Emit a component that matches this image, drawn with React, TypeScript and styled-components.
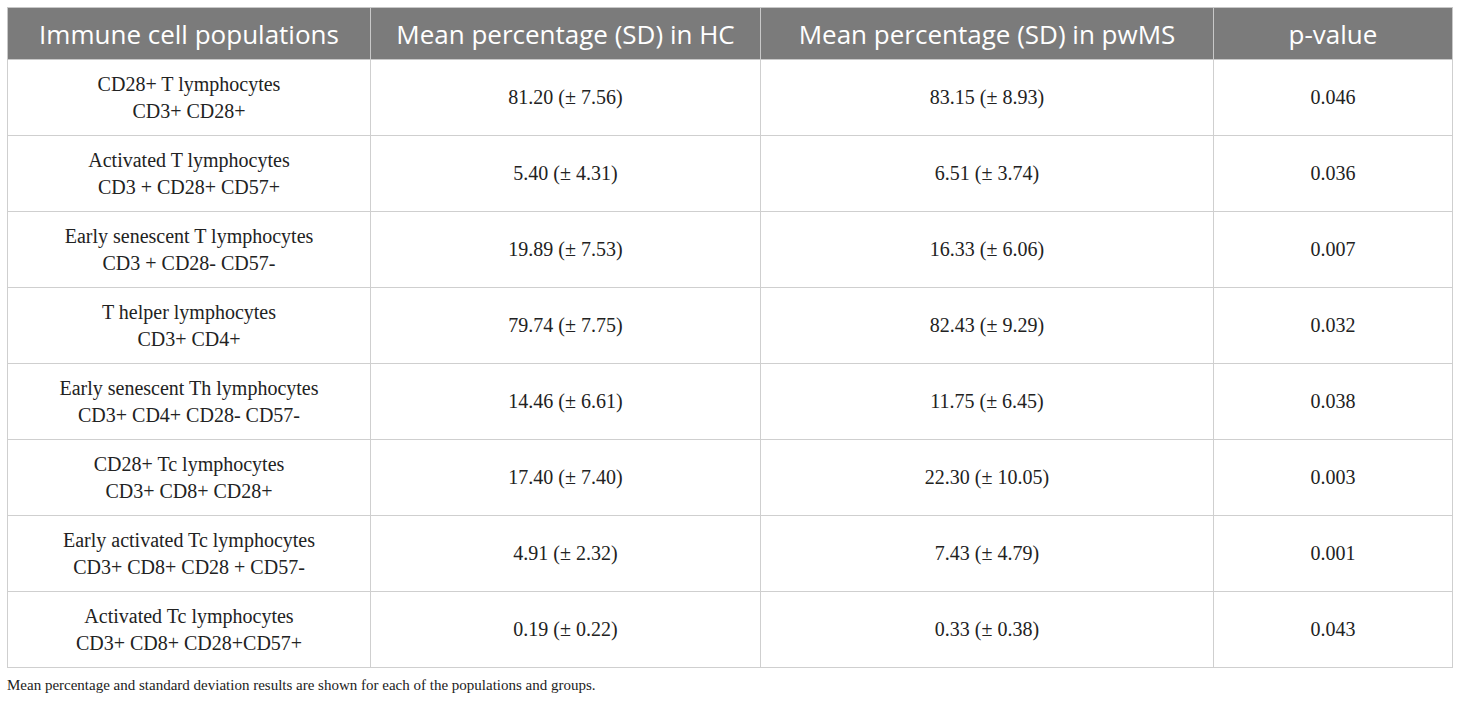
import React from 'react';
import styled, { createGlobalStyle } from 'styled-components';

const Global = createGlobalStyle`
  body {
    margin: 0;
    background: #fff;
  }
`;

const Page = styled.div`
  padding: 7px 8px 0 7px;
`;

const Table = styled.table`
  width: 1445px;
  border-collapse: collapse;
  table-layout: fixed;
`;

const Col = styled.col<{ w: number }>`
  width: ${(p) => p.w}px;
`;

const HeadCell = styled.th`
  height: 52px;
  box-sizing: border-box;
  padding: 0;
  background: #7b7b7b;
  color: #fff;
  font-family: "Open Sans", "Liberation Sans", sans-serif;
  font-size: 26px;
  font-weight: 400;
  text-align: center;
  border: 1px solid #c8c8c8;
`;

const Cell = styled.td`
  height: 76px;
  box-sizing: border-box;
  padding: 0 4px;
  border: 1px solid #cfcfcf;
  text-align: center;
  vertical-align: middle;
  font-family: "Liberation Serif", "Times New Roman", serif;
  font-size: 20px;
  line-height: 27px;
  color: #222;
`;

const Note = styled.div`
  margin-top: 9px;
  font-family: "Liberation Serif", "Times New Roman", serif;
  font-size: 15px;
  color: #222;
`;

const cols = [
  { label: 'Immune cell populations', w: 363 },
  { label: 'Mean percentage (SD) in HC', w: 390 },
  { label: 'Mean percentage (SD) in pwMS', w: 453 },
  { label: 'p-value', w: 239 },
];

const rows = [
  ['CD28+ T lymphocytes', 'CD3+ CD28+', '81.20 (± 7.56)', '83.15 (± 8.93)', '0.046'],
  ['Activated T lymphocytes', 'CD3 + CD28+ CD57+', '5.40 (± 4.31)', '6.51 (± 3.74)', '0.036'],
  ['Early senescent T lymphocytes', 'CD3 + CD28- CD57-', '19.89 (± 7.53)', '16.33 (± 6.06)', '0.007'],
  ['T helper lymphocytes', 'CD3+ CD4+', '79.74 (± 7.75)', '82.43 (± 9.29)', '0.032'],
  ['Early senescent Th lymphocytes', 'CD3+ CD4+ CD28- CD57-', '14.46 (± 6.61)', '11.75 (± 6.45)', '0.038'],
  ['CD28+ Tc lymphocytes', 'CD3+ CD8+ CD28+', '17.40 (± 7.40)', '22.30 (± 10.05)', '0.003'],
  ['Early activated Tc lymphocytes', 'CD3+ CD8+ CD28 + CD57-', '4.91 (± 2.32)', '7.43 (± 4.79)', '0.001'],
  ['Activated Tc lymphocytes', 'CD3+ CD8+ CD28+CD57+', '0.19 (± 0.22)', '0.33 (± 0.38)', '0.043'],
];

const App: React.FC = () => {
  return (
    <Page>
      <Global />
      <Table>
        <colgroup>
          {cols.map((c) => (
            <Col key={c.label} w={c.w} />
          ))}
        </colgroup>
        <thead>
          <tr>
            {cols.map((c) => (
              <HeadCell key={c.label}>{c.label}</HeadCell>
            ))}
          </tr>
        </thead>
        <tbody>
          {rows.map((r) => (
            <tr key={r[0]}>
              <Cell>
                {r[0]}
                <br />
                {r[1]}
              </Cell>
              <Cell>{r[2]}</Cell>
              <Cell>{r[3]}</Cell>
              <Cell>{r[4]}</Cell>
            </tr>
          ))}
        </tbody>
      </Table>
      <Note>Mean percentage and standard deviation results are shown for each of the populations and groups.</Note>
    </Page>
  );
};

export default App;
